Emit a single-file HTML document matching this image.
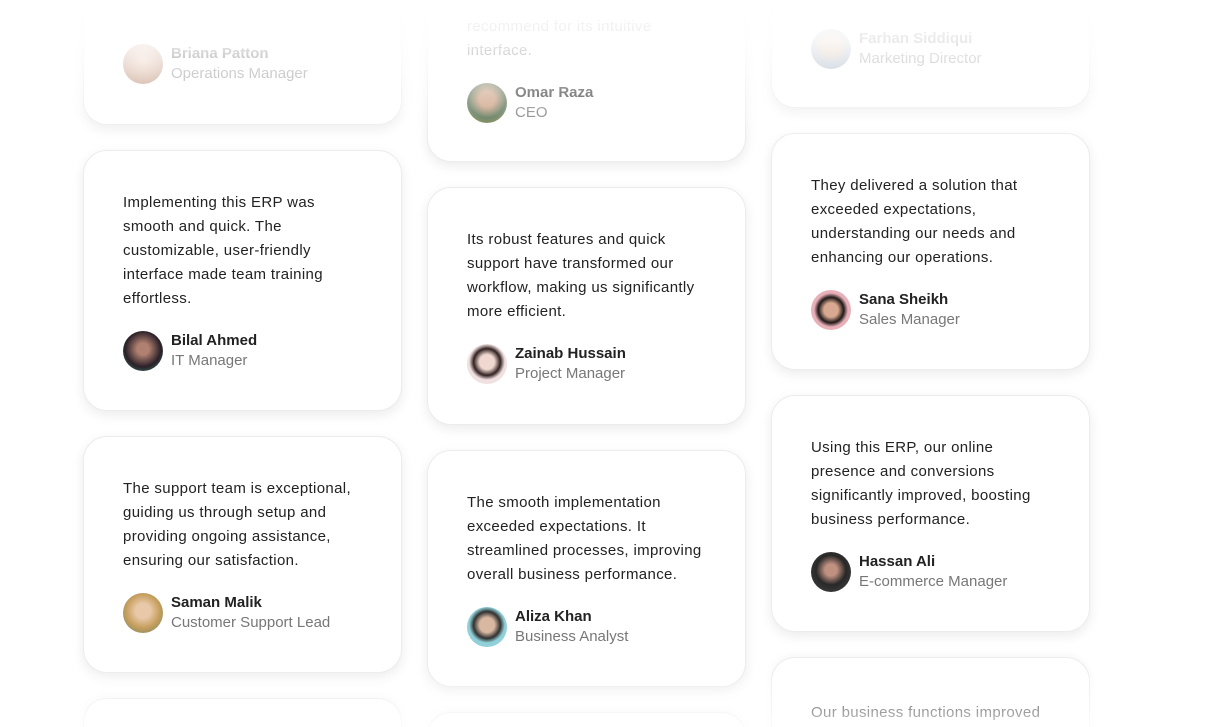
<!DOCTYPE html>
<html><head><meta charset="utf-8"><style>
*{margin:0;padding:0;box-sizing:border-box}
html{width:1207px;height:727px;overflow:hidden}
body{width:1207px;height:727px;overflow:hidden;background:#fff;font-family:"Segoe UI","Liberation Sans",sans-serif;position:relative}
.card{position:absolute;width:319px;background:#fff;border:1px solid #ececec;border-radius:24px;box-shadow:0 4px 12px rgba(0,0,0,.08);padding:40px 39px 39px 39px;overflow:hidden}
.bot{border-bottom:none;border-radius:24px 24px 0 0;box-shadow:0 -2px 8px rgba(0,0,0,.04)}
.t{font-size:15px;line-height:24px;color:#222;margin-bottom:20px;width:238px;letter-spacing:.35px}
.p{display:flex;align-items:center}
.av{width:40px;height:40px;border-radius:50%;margin-right:8px;flex:none}
.n{font-size:15px;font-weight:600;color:#222;line-height:20px}
.r{font-size:15px;color:#777;line-height:20px}
.fade-top{position:absolute;left:0;top:0;width:100%;height:140px;background:linear-gradient(#fff 0%,rgba(255,255,255,.9) 30%,rgba(255,255,255,.55) 60%,rgba(255,255,255,0) 100%);z-index:5}
.fade-bot{position:absolute;left:0;bottom:0;width:100%;height:60px;background:linear-gradient(rgba(255,255,255,0),rgba(255,255,255,.75));z-index:5}
</style></head><body>

<div class="card" style="left:83px;top:-110px;height:235px">
<div class="p" style="position:absolute;top:153px;left:39px"><div class="av" style="background:radial-gradient(circle at 50% 40%,#e8c0a8,#a06848)"></div><div><div class="n">Briana Patton</div><div class="r">Operations Manager</div></div></div></div>

<div class="card" style="left:83px;top:150px;height:261px">
<div class="t">Implementing this ERP was smooth and quick. The customizable, user-friendly interface made team training effortless.</div>
<div class="p"><div class="av" style="background:radial-gradient(circle at 50% 45%,#b08070 20%,#2a2028 60%,#3a9078)"></div><div><div class="n">Bilal Ahmed</div><div class="r">IT Manager</div></div></div></div>

<div class="card" style="left:83px;top:436px;height:237px">
<div class="t">The support team is exceptional, guiding us through setup and providing ongoing assistance, ensuring our satisfaction.</div>
<div class="p"><div class="av" style="background:radial-gradient(circle at 50% 45%,#e8c8a8 25%,#c8a060 55%,#708058)"></div><div><div class="n">Saman Malik</div><div class="r">Customer Support Lead</div></div></div></div>

<div class="card bot" style="left:83px;top:698px;height:29px"></div>

<div class="card" style="left:427px;top:-80px;height:242px">
<div class="t" style="position:absolute;top:94px;left:39px">recommend for its intuitive interface.</div>
<div class="p" style="position:absolute;top:162px;left:39px"><div class="av" style="background:radial-gradient(circle at 50% 40%,#c89878 25%,#4a6848 60%,#a89840)"></div><div><div class="n">Omar Raza</div><div class="r">CEO</div></div></div></div>

<div class="card" style="left:427px;top:187px;height:238px">
<div class="t">Its robust features and quick support have transformed our workflow, making us significantly more efficient.</div>
<div class="p"><div class="av" style="background:radial-gradient(circle at 50% 45%,#f0d8d0 25%,#302020 45%,#f0e0e0 60%)"></div><div><div class="n">Zainab Hussain</div><div class="r">Project Manager</div></div></div></div>

<div class="card" style="left:427px;top:450px;height:237px">
<div class="t">The smooth implementation exceeded expectations. It streamlined processes, improving overall business performance.</div>
<div class="p"><div class="av" style="background:radial-gradient(circle at 50% 45%,#d8b8a0 25%,#303030 45%,#90d0d8 60%)"></div><div><div class="n">Aliza Khan</div><div class="r">Business Analyst</div></div></div></div>

<div class="card bot" style="left:427px;top:712px;height:15px"></div>

<div class="card" style="left:771px;top:-130px;height:238px">
<div class="p" style="position:absolute;top:158px;left:39px"><div class="av" style="background:radial-gradient(circle at 50% 40%,#d0a888 25%,#90a0b8 60%)"></div><div><div class="n">Farhan Siddiqui</div><div class="r">Marketing Director</div></div></div></div>

<div class="card" style="left:771px;top:133px;height:237px">
<div class="t">They delivered a solution that exceeded expectations, understanding our needs and enhancing our operations.</div>
<div class="p"><div class="av" style="background:radial-gradient(circle at 50% 50%,#d8a890 25%,#201818 45%,#e8b0b8 60%)"></div><div><div class="n">Sana Sheikh</div><div class="r">Sales Manager</div></div></div></div>

<div class="card" style="left:771px;top:395px;height:237px">
<div class="t">Using this ERP, our online presence and conversions significantly improved, boosting business performance.</div>
<div class="p"><div class="av" style="background:radial-gradient(circle at 50% 45%,#c09080 20%,#282828 50%,#484848)"></div><div><div class="n">Hassan Ali</div><div class="r">E-commerce Manager</div></div></div></div>

<div class="card bot" style="left:771px;top:657px;height:70px">
<div class="t" style="margin-top:3px">Our business functions improved</div></div>

<div class="fade-top"></div>
<div class="fade-bot"></div>
</body></html>
